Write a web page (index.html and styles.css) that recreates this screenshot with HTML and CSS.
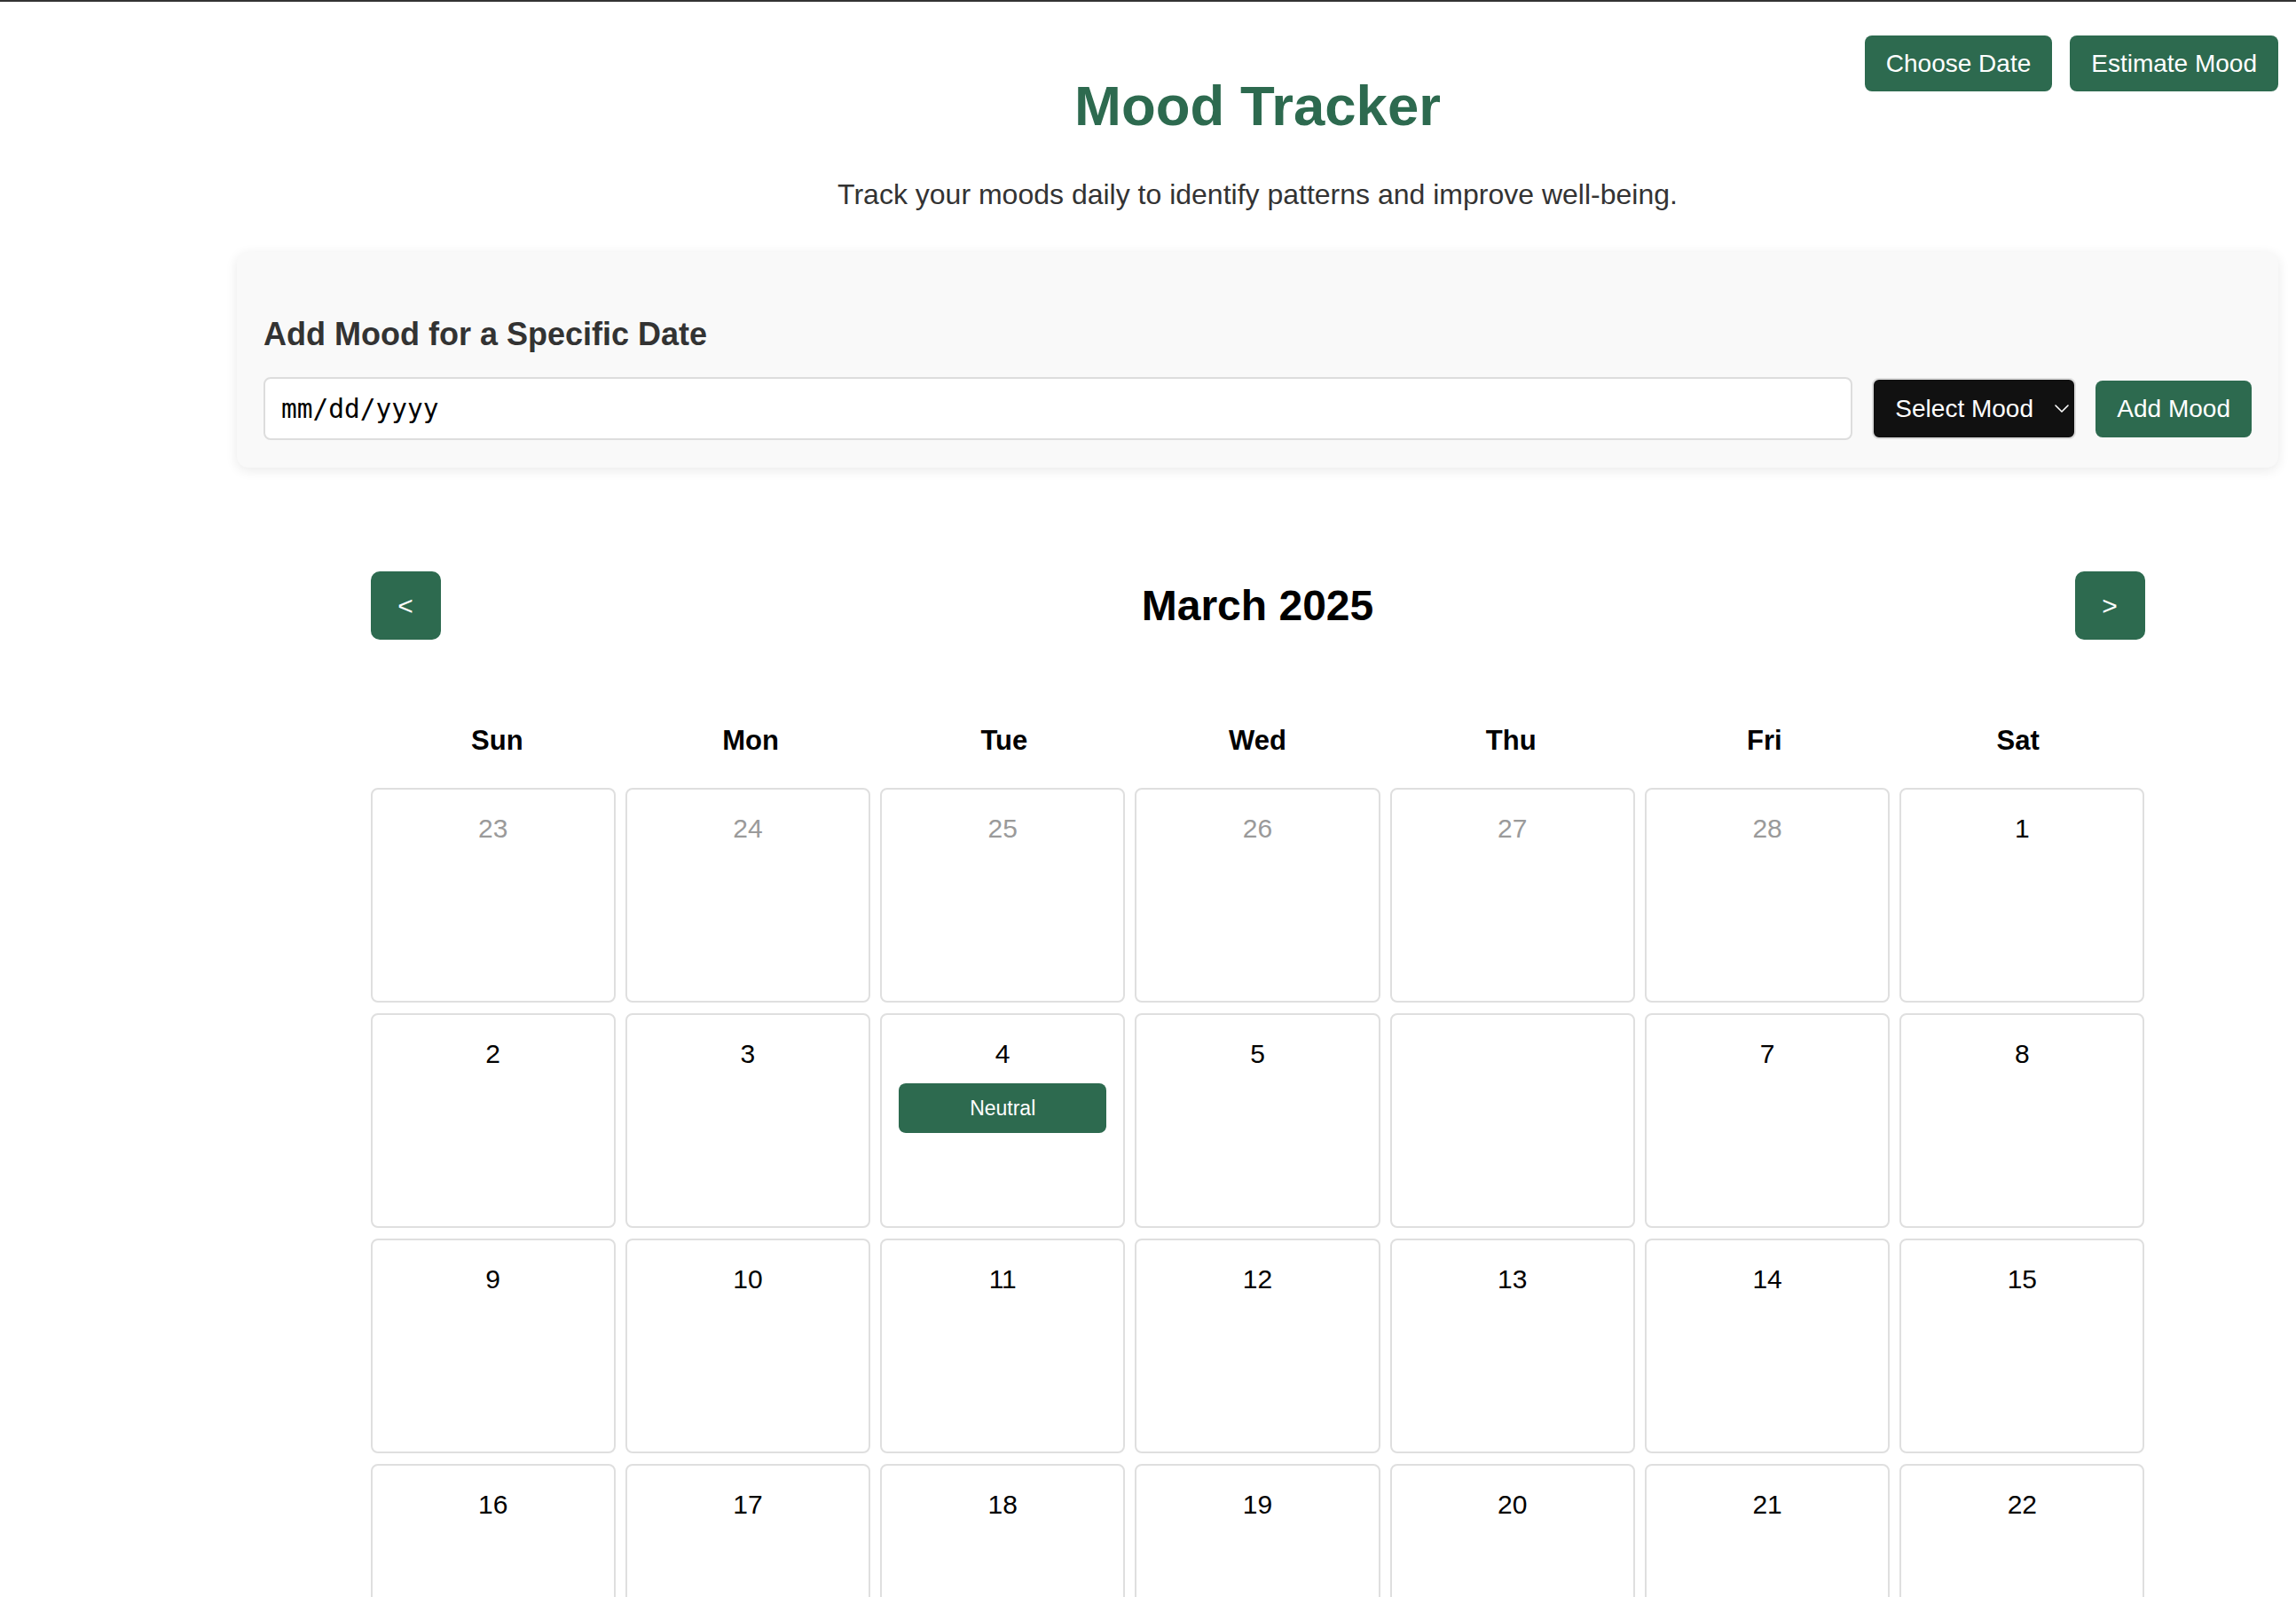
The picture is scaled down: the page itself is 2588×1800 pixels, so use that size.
FILE: index.html
```html
<!DOCTYPE html>
<html lang="en">
<head>
<meta charset="utf-8">
<title>Mood Tracker</title>
<link rel="stylesheet" href="styles.css">
</head>
<body>
<div class="page">
  <header class="topbar">
    <h1 class="title">Mood Tracker</h1>
    <div class="top-actions">
      <button class="btn">Choose Date</button>
      <button class="btn">Estimate Mood</button>
    </div>
  </header>
  <p class="subtitle">Track your moods daily to identify patterns and improve well-being.</p>

  <section class="card">
    <h2 class="card-title">Add Mood for a Specific Date</h2>
    <div class="form-row">
      <input class="date-input" type="text" placeholder="mm/dd/yyyy">
      <div class="select-wrap">
        <select class="mood-select">
          <option>Select Mood</option>
          <option>Happy</option>
          <option>Neutral</option>
          <option>Sad</option>
        </select>
        <svg class="chev" width="16" height="9" viewBox="0 0 16 9"><path d="M1 1 L8 8 L15 1" fill="none" stroke="#fff" stroke-width="1.6" stroke-linecap="round" stroke-linejoin="round"/></svg>
      </div>
      <button class="btn btn-add">Add Mood</button>
    </div>
  </section>

  <section class="calendar">
    <div class="cal-nav">
      <button class="nav-btn">&lt;</button>
      <h2 class="month">March 2025</h2>
      <button class="nav-btn">&gt;</button>
    </div>
    <div class="weekdays">
      <div>Sun</div><div>Mon</div><div>Tue</div><div>Wed</div><div>Thu</div><div>Fri</div><div>Sat</div>
    </div>
    <div class="days">
      <div class="day other"><span class="num">23</span></div>
      <div class="day other"><span class="num">24</span></div>
      <div class="day other"><span class="num">25</span></div>
      <div class="day other"><span class="num">26</span></div>
      <div class="day other"><span class="num">27</span></div>
      <div class="day other"><span class="num">28</span></div>
      <div class="day"><span class="num">1</span></div>

      <div class="day"><span class="num">2</span></div>
      <div class="day"><span class="num">3</span></div>
      <div class="day"><span class="num">4</span><div class="mood">Neutral</div></div>
      <div class="day"><span class="num">5</span></div>
      <div class="day"></div>
      <div class="day"><span class="num">7</span></div>
      <div class="day"><span class="num">8</span></div>

      <div class="day"><span class="num">9</span></div>
      <div class="day"><span class="num">10</span></div>
      <div class="day"><span class="num">11</span></div>
      <div class="day"><span class="num">12</span></div>
      <div class="day"><span class="num">13</span></div>
      <div class="day"><span class="num">14</span></div>
      <div class="day"><span class="num">15</span></div>

      <div class="day"><span class="num">16</span></div>
      <div class="day"><span class="num">17</span></div>
      <div class="day"><span class="num">18</span></div>
      <div class="day"><span class="num">19</span></div>
      <div class="day"><span class="num">20</span></div>
      <div class="day"><span class="num">21</span></div>
      <div class="day"><span class="num">22</span></div>
    </div>
  </section>
</div>
</body>
</html>
```
FILE: styles.css
```css
* { box-sizing: border-box; }

html, body {
  margin: 0;
  padding: 0;
  background: #ffffff;
}

body {
  border-top: 2px solid #333333;
  font-family: "Liberation Sans", Arial, Helvetica, sans-serif;
  color: #000000;
}

.page {
  margin: 0 20px 0 267px;
}

.topbar {
  display: grid;
  grid-template-columns: 1fr auto 1fr;
}

.title {
  grid-column: 2;
  margin: 81px 0 0;
  font-size: 63.5px;
  font-weight: 700;
  line-height: normal;
  color: #2d6a4f;
  text-align: center;
}

.top-actions {
  grid-column: 3;
  justify-self: end;
  align-self: start;
  display: flex;
  gap: 20px;
  margin-top: 38px;
}

.btn {
  height: 63px;
  padding: 0 24px;
  border: none;
  border-radius: 8px;
  background: #2d6a4f;
  color: #ffffff;
  font-family: "Liberation Sans", Arial, Helvetica, sans-serif;
  font-size: 28px;
  line-height: 1;
}

.subtitle {
  margin: 46px 0 0;
  font-size: 32px;
  line-height: normal;
  color: #333333;
  text-align: center;
}

.card {
  margin-top: 46px;
  padding: 30px 30px 31px;
  background: #f9f9f9;
  border-radius: 13px;
  box-shadow: 0 3px 14px rgba(0, 0, 0, 0.09);
}

.card-title {
  margin: 42px 0 27px;
  font-size: 36px;
  font-weight: 700;
  line-height: normal;
  color: #333333;
}

.form-row {
  display: flex;
  align-items: center;
  gap: 22px;
}

.date-input {
  flex: 1;
  height: 71px;
  padding: 0 18px;
  border: 2px solid #dddddd;
  border-radius: 8px;
  background: #ffffff;
  font-family: "DejaVu Sans Mono", "Liberation Mono", monospace;
  font-size: 29.5px;
  color: #000000;
  outline: none;
}

.date-input::placeholder {
  color: #000000;
  opacity: 1;
}

.select-wrap {
  position: relative;
  width: 230px;
  height: 69px;
}

.mood-select {
  -webkit-appearance: none;
  appearance: none;
  width: 100%;
  height: 100%;
  padding: 0 40px 0 24px;
  border: 2px solid #dcdcdc;
  border-radius: 8px;
  background: #111111;
  color: #ffffff;
  font-family: "Liberation Sans", Arial, Helvetica, sans-serif;
  font-size: 28px;
  outline: none;
}

.chev {
  position: absolute;
  right: 8px;
  top: 30px;
  pointer-events: none;
}

.btn-add {
  height: 64px;
}

.calendar {
  width: 2000px;
  margin: 117px auto 0;
}

.cal-nav {
  display: flex;
  align-items: center;
  justify-content: space-between;
}

.nav-btn {
  width: 79px;
  height: 77px;
  padding: 0;
  border: none;
  border-radius: 10px;
  background: #2d6a4f;
  color: #ffffff;
  font-family: "Liberation Sans", Arial, Helvetica, sans-serif;
  font-size: 30px;
  line-height: 1;
}

.month {
  margin: 0;
  font-size: 48px;
  font-weight: 700;
  line-height: normal;
  color: #000000;
}

.weekdays {
  display: grid;
  grid-template-columns: repeat(7, 1fr);
  margin-top: 96px;
  font-size: 31px;
  font-weight: 700;
  line-height: normal;
  text-align: center;
}

.days {
  display: grid;
  grid-template-columns: repeat(7, 1fr);
  column-gap: 11px;
  row-gap: 12px;
  margin-top: 35px;
}

.day {
  height: 242px;
  padding: 27px 19px 0;
  border: 2px solid #dfdfdf;
  border-radius: 8px;
  background: #ffffff;
  text-align: center;
}

.num {
  display: block;
  font-size: 30px;
  line-height: normal;
  color: #000000;
}

.day.other .num {
  color: #9a9a9a;
}

.mood {
  margin-top: 16px;
  padding: 15px 0;
  border-radius: 8px;
  background: #2d6a4f;
  color: #ffffff;
  font-size: 23px;
  line-height: 26px;
}
```
